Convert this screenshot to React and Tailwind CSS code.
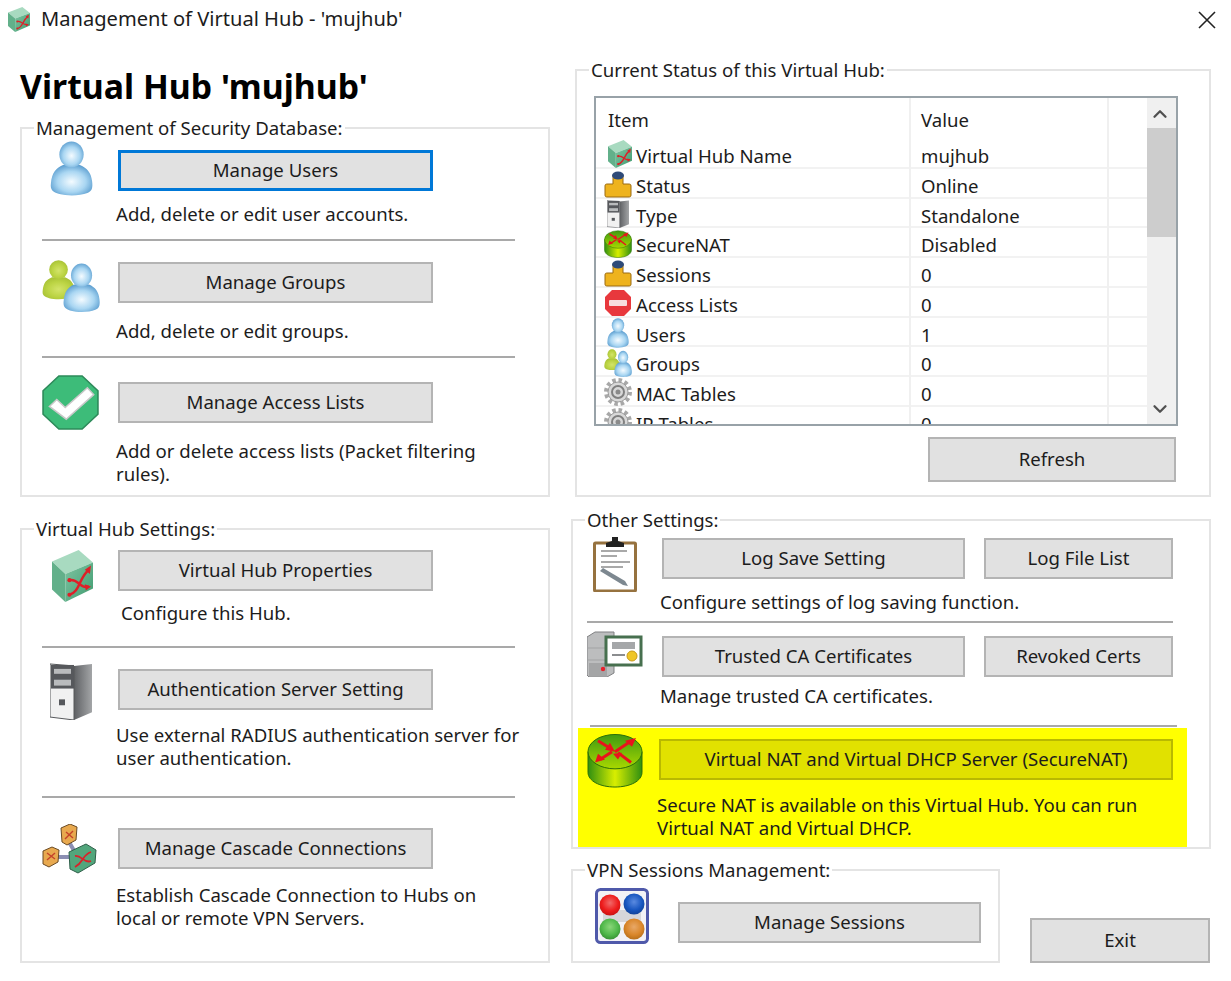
import React from 'react';
import { ChevronUp, ChevronDown } from 'lucide-react';

const Person = ({ id, transform, mid = '#a9d6f2', edge = '#4d93c9', light = '#f4fbff' }) => (
  <g transform={transform}>
    <defs>
      <radialGradient id={id} cx="0.5" cy="0.55" r="0.62">
        <stop offset="0" stopColor={light} />
        <stop offset="0.55" stopColor={mid} />
        <stop offset="1" stopColor={edge} />
      </radialGradient>
    </defs>
    <path d="M14 24C6 27 2 32 1 42C0 49 3 51 10 53C18 55 32 55 40 52C45 50 46 47 45 40C44 32 40 27 32 24Z" fill={`url(#${id})`} />
    <circle cx="23" cy="13.5" r="13" fill={`url(#${id})`} />
  </g>
);

const UserIcon = ({ className }) => (
  <svg viewBox="0 0 46 55" preserveAspectRatio="none" className={`blur-[0.4px] ${className}`}>
    <Person id="user-a" />
  </svg>
);

const GroupIcon = ({ className }) => (
  <svg viewBox="0 0 50 52" preserveAspectRatio="none" className={`blur-[0.4px] ${className}`}>
    <Person id="group-g" transform="translate(0 0) scale(0.62 0.72)" light="#d3e46a" mid="#bcd444" edge="#a3bd33" />
    <Person id="group-b" transform="translate(18 3) scale(0.7 0.9)" />
  </svg>
);

const CheckIcon = ({ className }) => (
  <svg viewBox="0 0 54 56" preserveAspectRatio="none" className={`blur-[0.4px] ${className}`}>
    <polygon points="16,1 38,1 53,16 53,40 38,55 16,55 1,40 1,16" fill="#3dbc79" stroke="#2d8a5a" strokeWidth="1.5" />
    <path d="M7 32L14 25L22 33L43 13L49 20L23 45Z" fill="#fff" stroke="#c8c8c8" strokeWidth="1.5" />
  </svg>
);

const HubIcon = ({ className }) => (
  <svg viewBox="0 0 40 50" preserveAspectRatio="none" className={`blur-[0.4px] ${className}`}>
    <defs>
      <linearGradient id="hub-f" x1="0" y1="0" x2="1" y2="1">
        <stop offset="0" stopColor="#7fc4a2" />
        <stop offset="1" stopColor="#3f9c70" />
      </linearGradient>
    </defs>
    <polygon points="0,11 26,0 40,12 13,23" fill="#a8dac0" />
    <polygon points="0,11 13,23 13,50 0,38" fill="#62b08a" />
    <polygon points="13,23 40,12 40,37 13,50" fill="url(#hub-f)" />
    <path d="M17 43C27 41 26 27 36 19M17 29C26 27 27 38 36 35" fill="none" stroke="#de1f28" strokeWidth="2.4" />
    <path d="M38 15L37 23L32 19ZM38 35L33 39L32 33Z" fill="#de1f28" />
    <circle cx="17" cy="29" r="2" fill="#de1f28" />
    <circle cx="17" cy="43" r="2" fill="#de1f28" />
  </svg>
);

const ServerIcon = ({ className }) => (
  <svg viewBox="0 0 42 58" preserveAspectRatio="none" className={`blur-[0.4px] ${className}`}>
    <defs>
      <linearGradient id="srv-s" x1="0" y1="0" x2="1" y2="0">
        <stop offset="0" stopColor="#5f6164" />
        <stop offset="1" stopColor="#a3a5a7" />
      </linearGradient>
    </defs>
    <polygon points="24,3 42,1 42,50 24,58" fill="url(#srv-s)" />
    <polygon points="0,1 24,3 24,58 0,55" fill="#f1f1f1" stroke="#55575a" strokeWidth="1" />
    <rect x="1" y="2" width="23" height="24" fill="#56585c" />
    <rect x="4" y="6" width="17" height="5" fill="#b9bbbd" />
    <rect x="4" y="17" width="17" height="6" fill="#b9bbbd" />
    <rect x="9" y="37" width="6" height="6" fill="#56585c" />
  </svg>
);

const CascadeIcon = ({ className }) => (
  <svg viewBox="0 0 55 50" preserveAspectRatio="none" className={`blur-[0.4px] ${className}`}>
    <path d="M27 18L34 30M14 33L32 33" stroke="#8c8fb3" strokeWidth="4" fill="none" />
    <polygon points="19,4 28,0 35,3 34,16 25,21 20,18" fill="#e8a94f" stroke="#6a4a24" />
    <polygon points="1,27 10,23 17,26 16,38 7,43 1,40" fill="#e8a94f" stroke="#6a4a24" />
    <polygon points="27,28 44,20 54,26 53,39 36,49 28,45" fill="#52a67c" stroke="#2f5f49" />
    <path d="M33 43C42 38 40 31 49 28M33 32C40 31 42 40 49 37" stroke="#d8232a" strokeWidth="1.8" fill="none" />
    <path d="M23 15L31 7M24 8L31 14M5 36L13 29M5 29L13 35" stroke="#c5422a" strokeWidth="1.4" fill="none" />
  </svg>
);

const ClipboardIcon = ({ className }) => (
  <svg viewBox="0 0 44 56" preserveAspectRatio="none" className={`blur-[0.4px] ${className}`}>
    <rect x="1.5" y="7" width="41" height="48" rx="1" fill="#fff" stroke="#96723f" strokeWidth="3" />
    <path d="M13 7L19 5V1H25V5L31 7V11H13Z" fill="#222" />
    <path d="M8 15H34M8 20H24M8 26H37M8 31H30" stroke="#a9a9a9" strokeWidth="2" />
    <path d="M7 35L30 49L35 50L32 45L10 32Z" fill="#7d8890" />
  </svg>
);

const CertIcon = ({ className }) => (
  <svg viewBox="0 0 56 46" preserveAspectRatio="none" className={`blur-[0.4px] ${className}`}>
    <path d="M0 6L8 1H27V42L20 46H2L0 44Z" fill="#bcbdbe" stroke="#808183" />
    <path d="M1 17H18M1 29H18" stroke="#a2a3a4" strokeWidth="1" />
    <rect x="2" y="32" width="18" height="13" fill="#a4a5a6" />
    <circle cx="16" cy="38" r="2.2" fill="#e8202a" />
    <rect x="19" y="6" width="35" height="28" fill="#fff" stroke="#47704f" strokeWidth="3" />
    <rect x="25" y="11" width="23" height="7" fill="#a5a7a9" />
    <path d="M25 24H38" stroke="#8b8d8f" strokeWidth="2" />
    <circle cx="45" cy="25" r="5" fill="#efc628" stroke="#c89a18" />
  </svg>
);

const RouterIcon = ({ className, id = 'router-a' }) => (
  <svg viewBox="0 0 56 56" preserveAspectRatio="none" className={`blur-[0.4px] ${className}`}>
    <defs>
      <linearGradient id={id} x1="0" y1="0" x2="1" y2="0">
        <stop offset="0" stopColor="#2f8f10" />
        <stop offset="0.5" stopColor="#d8ee00" />
        <stop offset="1" stopColor="#2f8f10" />
      </linearGradient>
      <linearGradient id={`${id}-t`} x1="0" y1="0" x2="0" y2="1">
        <stop offset="0" stopColor="#3f9a10" />
        <stop offset="1" stopColor="#a8d800" />
      </linearGradient>
    </defs>
    <path d="M1 19V40C1 49 13 55 28 55C43 55 55 49 55 40V19Z" fill={`url(#${id})`} stroke="#2c6e08" />
    <ellipse cx="28" cy="19" rx="27" ry="17.5" fill={`url(#${id}-t)`} stroke="#2c6e08" />
    <path d="M11 8L24 16M28 19L43 9M25 19L13 27M31 20L44 30" stroke="#e8141c" strokeWidth="3" fill="none" />
    <path d="M28 19L18 17L23 10ZM49 5L45 14L38 8ZM8 30L11 21L18 27ZM26 21L35 20L31 27Z" fill="#e8141c" />
  </svg>
);

const Ball = ({ id, cx, cy, light, color, dark }) => (
  <>
    <defs>
      <radialGradient id={id} cx="0.5" cy="0.4" r="0.65">
        <stop offset="0" stopColor={light} />
        <stop offset="0.6" stopColor={color} />
        <stop offset="1" stopColor={dark} />
      </radialGradient>
    </defs>
    <circle cx={cx} cy={cy} r="10.5" fill={`url(#${id})`} />
  </>
);

const SessionsIcon = ({ className }) => (
  <svg viewBox="0 0 54 56" preserveAspectRatio="none" className={`blur-[0.5px] ${className}`}>
    <rect x="1.5" y="1.5" width="51" height="53" rx="4" fill="#f2f2f6" stroke="#4f59aa" strokeWidth="3" />
    <rect x="8" y="22" width="38" height="12" fill="#d6d6da" />
    <Ball id="ball-r" cx="15" cy="17" light="#f06a6a" color="#ee1c1c" dark="#c01010" />
    <Ball id="ball-b" cx="39" cy="16" light="#5a8ae0" color="#1856c0" dark="#123f90" />
    <Ball id="ball-g" cx="15" cy="41" light="#8ad67a" color="#4fb84a" dark="#338a30" />
    <Ball id="ball-o" cx="39" cy="41" light="#e8a868" color="#d9862a" dark="#b06a18" />
  </svg>
);

const PipeIcon = () => (
  <svg viewBox="0 0 28 28" className="w-[28px] h-[28px] blur-[0.4px]">
    <path d="M1 16C1 14 2 14 4 14H9V6H19V14H24C26 14 27 14 27 16V25C27 27 26 27 24 27H4C2 27 1 27 1 25Z" fill="#eeb31e" stroke="#9a6a12" strokeWidth="1" />
    <ellipse cx="14" cy="5.5" rx="6" ry="4" fill="#2e4a78" />
  </svg>
);

const StopIcon = () => (
  <svg viewBox="0 0 28 28" className="w-[28px] h-[28px] blur-[0.4px]">
    <polygon points="8,1 20,1 27,8 27,20 20,27 8,27 1,20 1,8" fill="#e8383d" />
    <rect x="5" y="11" width="18" height="6" rx="1" fill="#f7dede" />
  </svg>
);

const GearIcon = () => (
  <svg viewBox="0 0 28 28" className="w-[28px] h-[28px] blur-[0.4px]">
    <circle cx="14" cy="14" r="12" fill="none" stroke="#a8a8a8" strokeWidth="4" strokeDasharray="3.5 2.8" />
    <circle cx="14" cy="14" r="10" fill="#d8d8d8" stroke="#9a9a9a" />
    <circle cx="14" cy="14" r="6" fill="none" stroke="#808080" strokeWidth="2" />
    <circle cx="14" cy="14" r="2.5" fill="#8a8a8a" />
  </svg>
);

const statusRows = [
  { item: 'Virtual Hub Name', value: 'mujhub', icon: <HubIcon className="w-[24px] h-[28px] ml-[4px]" /> },
  { item: 'Status', value: 'Online', icon: <PipeIcon /> },
  { item: 'Type', value: 'Standalone', icon: <ServerIcon className="w-[22px] h-[28px] ml-[3px]" /> },
  { item: 'SecureNAT', value: 'Disabled', icon: <RouterIcon id="router-b" className="w-[28px] h-[28px]" /> },
  { item: 'Sessions', value: '0', icon: <PipeIcon /> },
  { item: 'Access Lists', value: '0', icon: <StopIcon /> },
  { item: 'Users', value: '1', icon: <UserIcon className="w-[22px] h-[30px] ml-[3px]" /> },
  { item: 'Groups', value: '0', icon: <GroupIcon className="w-[28px] h-[28px]" /> },
  { item: 'MAC Tables', value: '0', icon: <GearIcon /> },
  { item: 'IP Tables', value: '0', icon: <GearIcon /> },
];

const Btn = ({ className = '', tone = 'bg-[#e1e1e1] border-2 border-[#b4b4b4]', children }) => (
  <button className={`${tone} text-[#1c1c1c] text-center shrink-0 pb-[2px] ${className}`}>
    {children}
  </button>
);

const Group = ({ title, className = '', children }) => (
  <div className={`relative border-2 border-[#e4e4e4] ${className}`}>
    <span className="absolute left-[12px] -top-[13px] bg-white px-[2px] leading-[23px] whitespace-nowrap">{title}</span>
    {children}
  </div>
);

// one icon + button + description block of the left hand panels
const Row = ({ icon, label, desc, className, descClass, tone }) => (
  <div className={`flex w-[473px] ${className}`}>
    <div className="w-[76px] shrink-0">{icon}</div>
    <div className="w-[314px] shrink-0">
      <Btn tone={tone} className="w-[315px] h-[41px]">{label}</Btn>
      <p className={`leading-[23px] w-[420px] ${descClass}`}>{desc}</p>
    </div>
  </div>
);

const StatusTable = () => (
  <div className="w-[584px] h-[330px] border-2 border-[#98a2a8] flex overflow-hidden">
    <div className="w-[551px] shrink-0">
      <div className="grid grid-cols-[315px_198px_38px] h-[41px]">
        <div className="pl-[12px] pt-[2px] flex items-center border-r-2 border-[#f0f0f0]">Item</div>
        <div className="pl-[10px] pt-[2px] flex items-center border-r-2 border-[#f0f0f0]">Value</div>
        <div />
      </div>
      {statusRows.map((row) => (
        <div key={row.item} className="grid grid-cols-[315px_198px_38px] h-[29.75px] border-b-2 border-[#f2f2f2]">
          <div className="flex items-center pl-[8px] border-r-2 border-[#f0f0f0] whitespace-nowrap">
            <div className="w-[32px] shrink-0">{row.icon}</div>
            <span className="mt-[3px]">{row.item}</span>
          </div>
          <div className="flex items-center pl-[10px] border-r-2 border-[#f0f0f0]">
            <span className="mt-[3px]">{row.value}</span>
          </div>
          <div />
        </div>
      ))}
    </div>
    <div className="w-[29px] shrink-0 bg-[#f0f0f0] flex flex-col items-stretch">
      <div className="h-[30px] pt-[2px] pr-[3px] flex items-center justify-center">
        <ChevronUp size={22} strokeWidth={2.5} color="#505050" />
      </div>
      <div className="h-[109px] bg-[#cdcdcd]" />
      <div className="flex-1" />
      <div className="h-[30px] pr-[3px] flex items-center justify-center">
        <ChevronDown size={22} strokeWidth={2.5} color="#505050" />
      </div>
    </div>
  </div>
);

export default function App() {
  return (
    <div className="w-[1231px] h-[981px] bg-white overflow-hidden text-[#1c1c1c] text-[18.6px] font-['Noto_Sans',sans-serif]">
      <div className="h-[40px] flex items-start pl-[8px] pt-[7px] pr-[15px]">
        <HubIcon className="w-[22px] h-[25px]" />
        <span className="ml-[11px] text-[20.1px] leading-[24px]">Management of Virtual Hub - 'mujhub'</span>
        <svg viewBox="0 0 18 18" className="w-[18px] h-[18px] ml-auto mt-[4px]">
          <path d="M1 1L17 17M17 1L1 17" stroke="#222" strokeWidth="1.6" />
        </svg>
      </div>

      <div className="flex">
        <div className="w-[571px] pl-[20px] shrink-0">
          <h1 className="h-[87px] pt-[21px] text-[33.8px] leading-[50px] font-bold text-black whitespace-nowrap">Virtual Hub 'mujhub'</h1>

          <Group title="Management of Security Database:" className="w-[530px] h-[370px] pl-[20px]">
            <Row
              label="Manage Users"
              desc="Add, delete or edit user accounts."
              tone="bg-[#e1e1e1] border-[3px] border-[#0078d7]"
              className="h-[112px] pt-[21px] border-b-2 border-[#a9a9a9]"
              descClass="mt-[11px] -ml-[2px]"
              icon={<UserIcon className="w-[43px] h-[55px] ml-[8px] -mt-[9px]" />}
            />
            <Row
              label="Manage Groups"
              desc="Add, delete or edit groups."
              className="h-[117px] pt-[21px] border-b-2 border-[#a9a9a9]"
              descClass="mt-[16px] -ml-[2px]"
              icon={<GroupIcon className="w-[58px] h-[52px] -mt-[2px]" />}
            />
            <Row
              label="Manage Access Lists"
              desc={<>Add or delete access lists (Packet filtering<br />rules).</>}
              className="pt-[24px]"
              descClass="mt-[16px] -ml-[2px]"
              icon={<CheckIcon className="w-[57px] h-[55px] -mt-[7px]" />}
            />
          </Group>

          <Group title="Virtual Hub Settings:" className="w-[530px] h-[435px] mt-[31px] pl-[20px]">
            <Row
              label="Virtual Hub Properties"
              desc="Configure this Hub."
              className="h-[118px] pt-[20px] border-b-2 border-[#a9a9a9]"
              descClass="mt-[10px] ml-[3px]"
              icon={<HubIcon className="w-[41px] h-[52px] ml-[10px]" />}
            />
            <Row
              label="Authentication Server Setting"
              desc={<>Use external RADIUS authentication server for<br />user authentication.</>}
              className="h-[150px] pt-[21px] border-b-2 border-[#a9a9a9]"
              descClass="mt-[13px] -ml-[2px]"
              icon={<ServerIcon className="w-[42px] h-[57px] ml-[8px] -mt-[6px]" />}
            />
            <Row
              label="Manage Cascade Connections"
              desc={<>Establish Cascade Connection to Hubs on<br />local or remote VPN Servers.</>}
              className="pt-[30px]"
              descClass="mt-[14px] -ml-[2px]"
              icon={<CascadeIcon className="w-[55px] h-[50px] -mt-[4px]" />}
            />
          </Group>
        </div>

        <div className="w-[640px] shrink-0">
          <Group title="Current Status of this Virtual Hub:" className="w-[636px] h-[428px] ml-[4px] mt-[29px] pl-[17px] pt-[25px]">
            <StatusTable />
            <Btn className="block w-[248px] h-[45px] mt-[11px] ml-[334px]">Refresh</Btn>
          </Group>

          <Group title="Other Settings:" className="w-[640px] h-[330px] mt-[22px] pl-[14px]">
            <div className="w-[586px] h-[102px] pt-[17px] border-b-2 border-[#a9a9a9] flex">
              <div className="w-[75px] shrink-0">
                <ClipboardIcon className="w-[44px] h-[56px] ml-[6px] -mt-[2px]" />
              </div>
              <div>
                <div className="flex gap-[19px]">
                  <Btn className="w-[303px] h-[41px]">Log Save Setting</Btn>
                  <Btn className="w-[189px] h-[41px]">Log File List</Btn>
                </div>
                <p className="leading-[23px] mt-[11px] -ml-[2px]">Configure settings of log saving function.</p>
              </div>
            </div>
            <div className="w-[586px] h-[102px] pt-[13px] flex">
              <div className="w-[75px] shrink-0">
                <CertIcon className="w-[56px] h-[46px] -mt-[5px]" />
              </div>
              <div>
                <div className="flex gap-[19px]">
                  <Btn className="w-[303px] h-[41px]">Trusted CA Certificates</Btn>
                  <Btn className="w-[189px] h-[41px]">Revoked Certs</Btn>
                </div>
                <p className="leading-[23px] mt-[7px] -ml-[2px]">Manage trusted CA certificates.</p>
              </div>
            </div>
            <div className="w-[587px] h-[2px] ml-[3px] bg-[#a9a9a9]" />
            <div className="w-[609px] h-[119px] -ml-[9px] mt-[1px] bg-[#ffff00] pl-[9px] pt-[11px] flex">
              <div className="w-[72px] shrink-0">
                <RouterIcon className="w-[56px] h-[55px] -mt-[6px]" />
              </div>
              <div>
                <Btn tone="bg-[#e1e100] border-2 border-[#b9b900]" className="w-[514px] h-[41px]">Virtual NAT and Virtual DHCP Server (SecureNAT)</Btn>
                <p className="leading-[23px] mt-[13px] -ml-[2px]">Secure NAT is available on this Virtual Hub. You can run<br />Virtual NAT and Virtual DHCP.</p>
              </div>
            </div>
          </Group>

          <div className="flex items-end mt-[20px]">
            <Group title="VPN Sessions Management:" className="w-[429px] h-[94px] pl-[22px] flex">
              <SessionsIcon className="w-[54px] h-[56px] mt-[17px] shrink-0" />
              <Btn className="w-[303px] h-[41px] ml-[29px] mt-[31px]">Manage Sessions</Btn>
            </Group>
            <Btn className="w-[180px] h-[45px] ml-[30px]">Exit</Btn>
          </div>
        </div>
      </div>
    </div>
  );
}
